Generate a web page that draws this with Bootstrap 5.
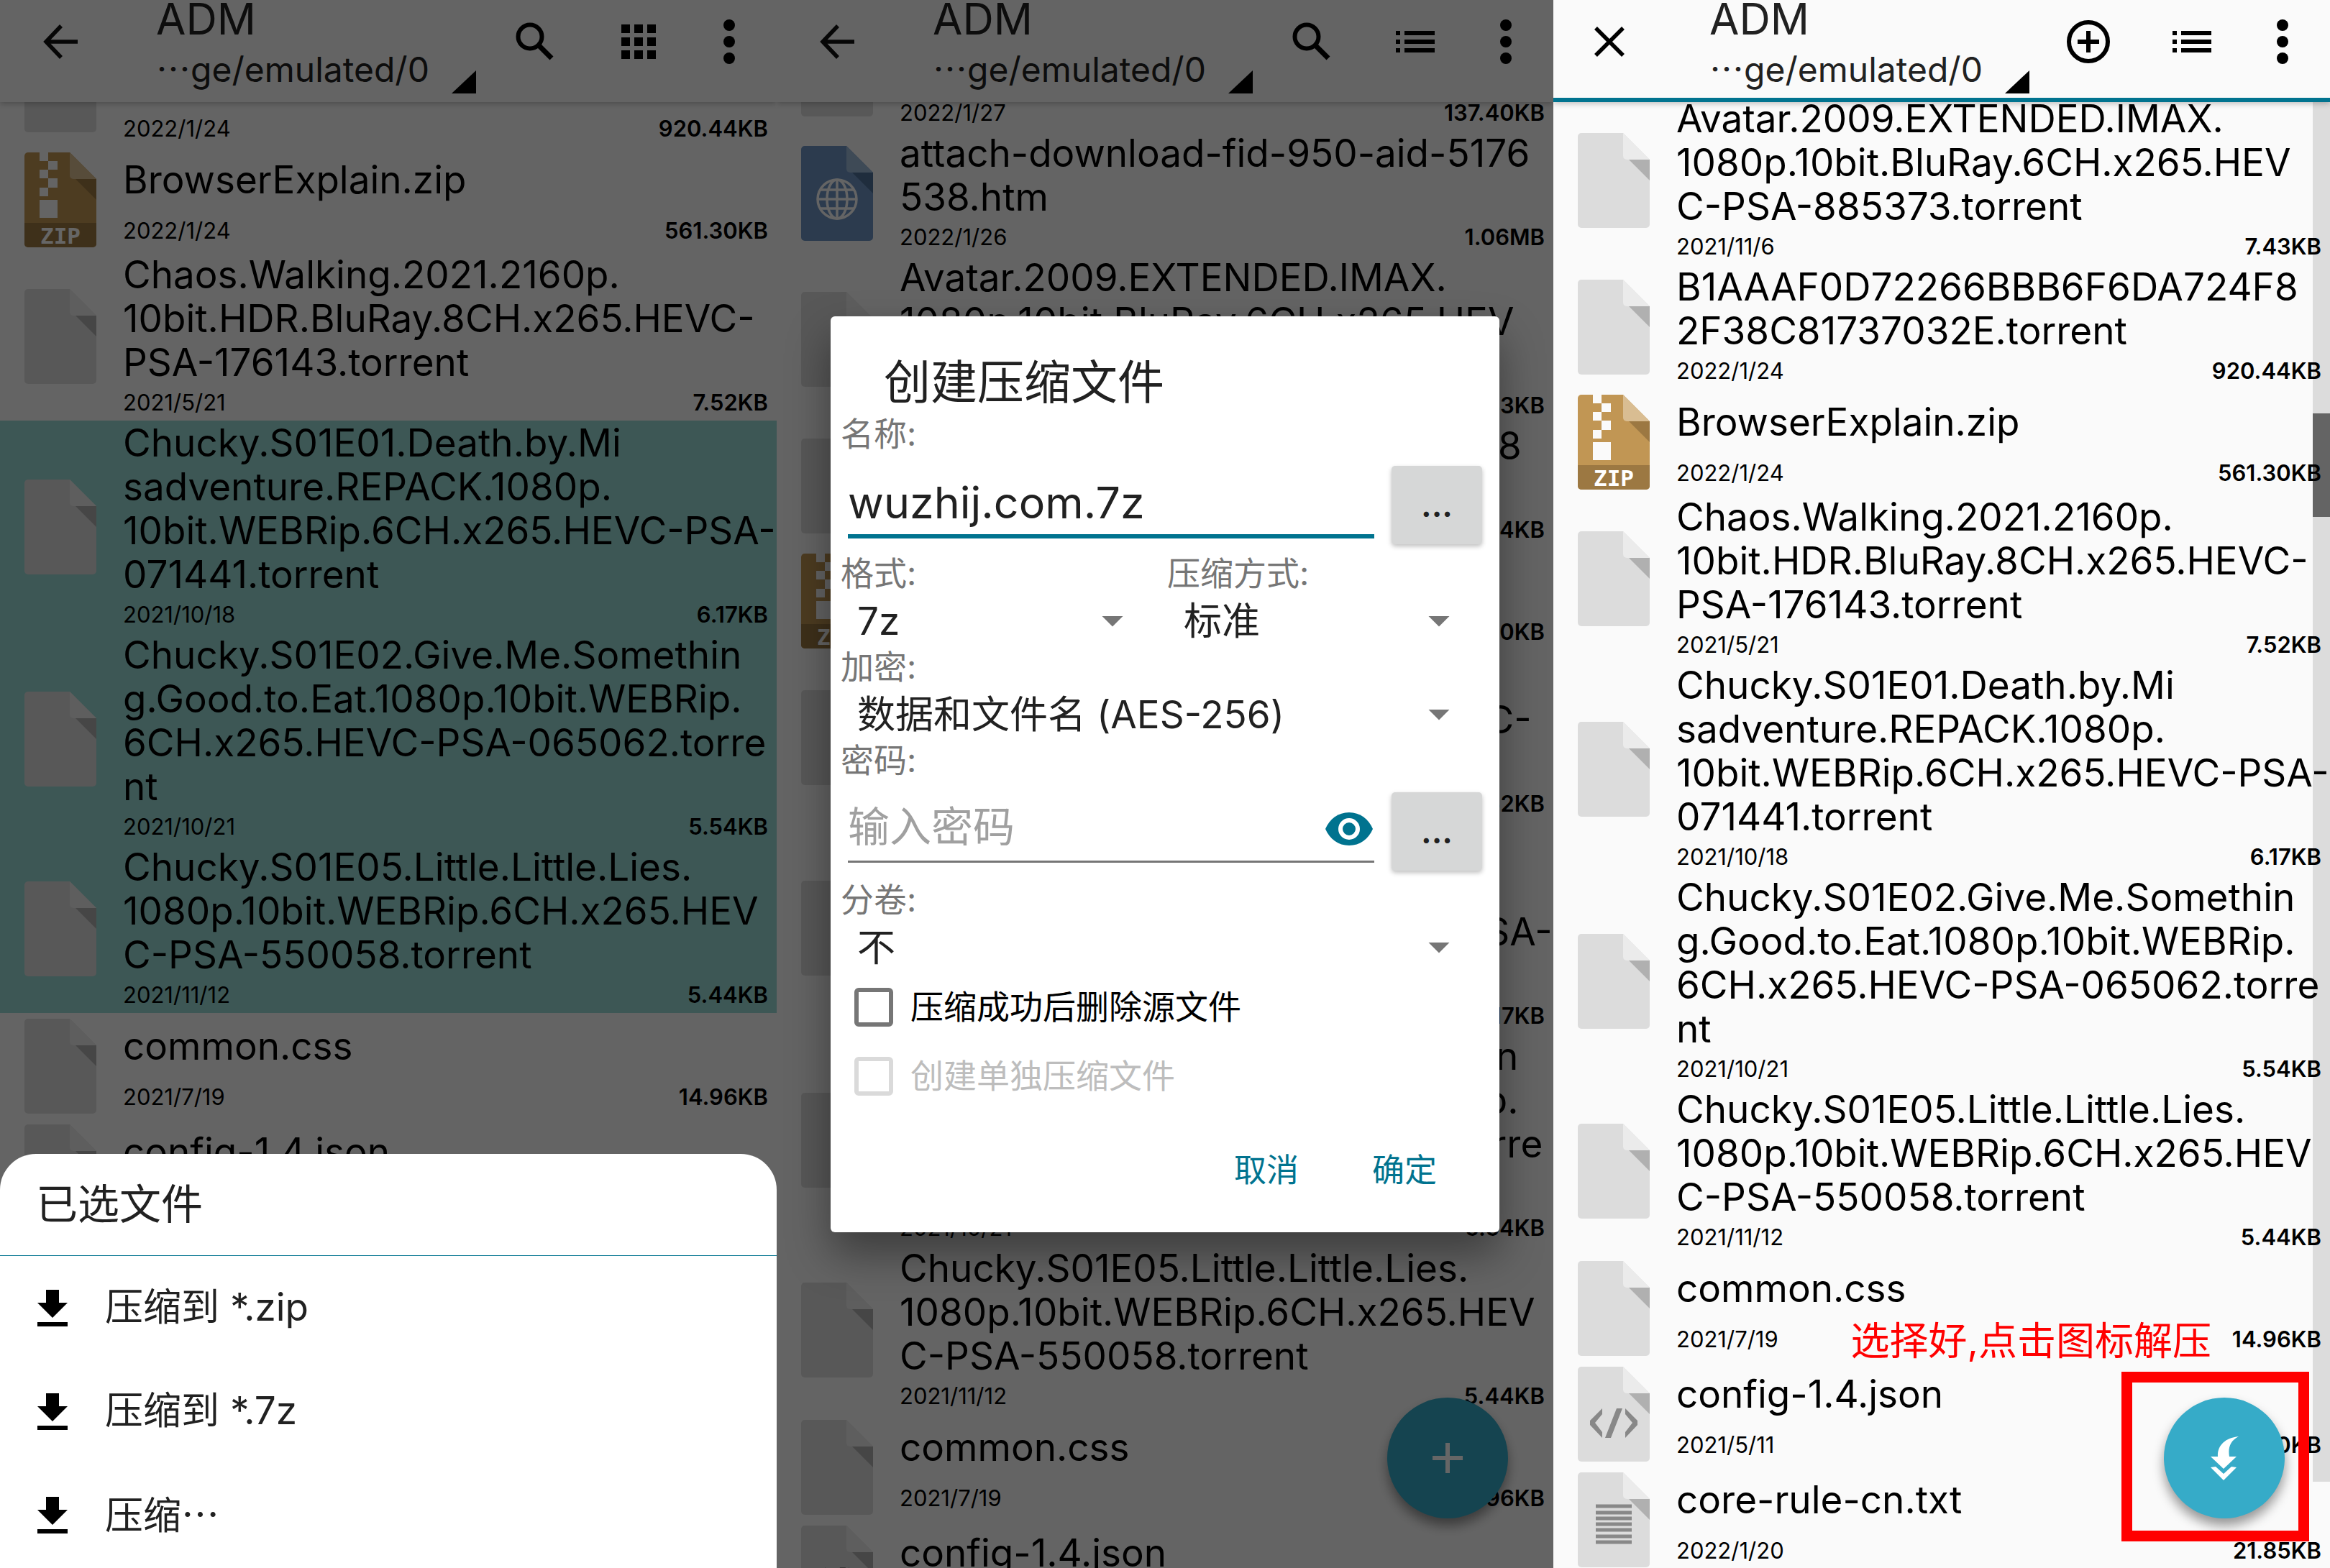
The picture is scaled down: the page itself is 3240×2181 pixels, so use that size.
<!DOCTYPE html>
<html lang="zh-CN">
<head>
<meta charset="utf-8">
<meta name="viewport" content="width=device-width, initial-scale=1">
<title>ADM</title>
<link href="https://cdn.jsdelivr.net/npm/bootstrap@5.3.0/dist/css/bootstrap.min.css" rel="stylesheet">
<style>
body{font-family:Inter,"Noto Sans CJK SC",sans-serif;color:#000;background:#fafafa}
svg{flex-shrink:0}
.phone{background:#fafafa;flex:1 1 0;min-width:0}
.topbar{background:#fafafa;height:142px;z-index:2;color:#212121;box-shadow:0 2px 8px rgba(0,0,0,.25);padding-right:12px}
.topbar.picking{border-bottom:6px solid #00738f}
.topbar button{height:116px;width:144px}
.topbar .nav-btn{width:217px;padding-left:54px}
.topbar .more-btn{width:108px}
.app-name{font-size:60px;line-height:52px}
.app-path{font-size:48px;line-height:82px;white-space:nowrap}
.dots{font-family:"Noto Sans CJK SC",sans-serif}
.corner{margin:98px 10px 0 0}
.plain{border:0;background:none;padding:0;color:#000}
.files{margin-top:-8px;z-index:1}
.scroll-a{margin-top:-111px}
.scroll-b{margin-top:-133px}
.file{min-height:147px;padding:1px 12px 1px 34px;gap:37px}
.file>div{min-width:0}
.picked{background:#98d9d5}
.fname{font-size:53px;line-height:61px;min-height:91px;white-space:nowrap}
.fmeta{font-size:31px;line-height:49px}
.fsize{font-weight:600}
.dim{background:rgba(0,0,0,.6);z-index:3}
.sheet{background:#fff;border-radius:50px 50px 0 0;color:#212121;z-index:4;padding-bottom:2px}
.sheet h2{font-size:58px;line-height:141px;padding-left:50px;font-weight:400;border-bottom:1px solid #00738f}
.sheet button{height:144px;font-size:53px;padding-left:52px;gap:52px;color:#212121}
.dialog-layer{z-index:4;padding-bottom:28px}
.dlg{width:930px;background:#fff;border-radius:6px;color:#212121;box-shadow:0 30px 60px rgba(0,0,0,.4);padding:0 8px 56px 14px}
.dlg h2{font-size:65px;line-height:84px;font-weight:400;padding:50px 0 1px 60px}
.cap{font-size:46px;line-height:56px;color:#767676}
.entry{margin:17px 16px 12px 10px;gap:24px}
.entry input{border:0;border-bottom:6px solid #00738f;height:101px;font-size:61px;padding:8px 0 0;color:#212121;background:none;outline:0;min-width:0}
.entry .secret{border-bottom:3px solid #767676;height:98px;font-size:58px;padding:2px 70px 0 0}
.secret::placeholder{color:#a0a0a0}
.eye{right:2px;top:28px}
.square-btn{flex:none;width:126px;height:109px;background:#d6d7d7;border:0;border-radius:5px;font-size:46px;font-weight:600;box-shadow:0 3px 6px rgba(0,0,0,.25);color:#212121}
.pick::after{content:"";position:absolute;right:61px;top:32px;width:30px;height:15px;background:#767676;clip-path:polygon(0 0,100% 0,50% 100%)}
.pick select{appearance:none;border:0;background:none;width:100%;height:74px;font-size:53px;padding:0 0 0 23px;color:#212121}
.tick{height:96px;gap:24px;padding-left:19px;font-size:46px;color:#000}
.tick input{appearance:none;width:54px;height:54px;border:6px solid #767676;border-radius:6px;margin:0}
.tick.off{color:#bdbdbd}
.tick.off input{border-color:#dadada}
.acts{margin-top:53px;gap:102px;padding-right:79px}
.acts button{font-size:45px;line-height:60px;color:#00738f}
.fab{width:168px;height:168px;border-radius:50%;background:#36abc8;border:0;right:63px;bottom:69px;padding:0;box-shadow:0 10px 16px rgba(0,0,0,.4);z-index:2}
.hint{right:165px;bottom:283px;font-size:54px;line-height:64px;color:#f00;z-index:2;white-space:nowrap}
.frame{right:29px;bottom:37px;width:261px;height:236px;border:15px solid #f00;z-index:3}
.track{right:0;top:142px;width:24px;bottom:120px;background:#dcdcdc}
.thumb{top:433px;height:144px;background:#646464}
</style>
<script src="https://cdn.jsdelivr.net/npm/bootstrap@5.3.0/dist/js/bootstrap.bundle.min.js"></script>
</head>
<body class="vh-100 overflow-hidden">
<svg class="d-none">
  <symbol id="page" viewBox="0 0 100 132"><path fill="#dcdcdc" d="M5 0H63L100 37V127a5 5 0 0 1-5 5H5a5 5 0 0 1-5-5V5a5 5 0 0 1 5-5z"/><path fill="#ebebeb" d="M63 0L100 37H68a5 5 0 0 1-5-5z"/><path fill="#b0b0b0" d="M71 37H100V66z"/></symbol>
  <symbol id="zip" viewBox="0 0 100 132"><path fill="#c19654" d="M5 0H63L100 37V127a5 5 0 0 1-5 5H5a5 5 0 0 1-5-5V5a5 5 0 0 1 5-5z"/><path fill="#d9bd92" d="M63 0L100 37H68a5 5 0 0 1-5-5z"/><path fill="#9c7842" d="M71 37H100V66zM0 98H100V127a5 5 0 0 1-5 5H5a5 5 0 0 1-5-5z"/><path fill="#fafafa" d="M21 0H33V12H46V24H33V36H46V49H33V61H21V49H33V36H21V24H33V12H21zM21 66H46V91H21z"/><text x="50" y="127" text-anchor="middle" font-family="DejaVu Sans Mono" font-weight="700" font-size="31" fill="#fff">ZIP</text></symbol>
  <symbol id="web" viewBox="0 0 100 132"><path fill="#6e94c3" d="M5 0H63L100 37V127a5 5 0 0 1-5 5H5a5 5 0 0 1-5-5V5a5 5 0 0 1 5-5z"/><path fill="#9bb8d8" d="M63 0L100 37H68a5 5 0 0 1-5-5z"/><path fill="#4f7199" d="M71 37H100V66z"/><g fill="none" stroke="#fafafa" stroke-width="3.5"><circle cx="50" cy="74" r="27"/><ellipse cx="50" cy="74" rx="14" ry="27"/><path d="M50 47V101M23 74H77M27 61H73M27 87H73"/></g></symbol>
  <symbol id="code" viewBox="0 0 100 132"><use href="#page"/><path fill="#888" d="M34 58V66L24 78L34 91V99L17 81V75zM66 58V66L76 78L66 91V99L83 81V75zM54 58H62L46 99H38z"/></symbol>
  <symbol id="txt" viewBox="0 0 100 132"><use href="#page"/><path stroke="#888" stroke-width="5" d="M25 47H75M25 56H75M25 64H75M25 72H75M25 80H75M25 89H75M25 97H75"/></symbol>
  <symbol id="back" viewBox="-6 0 54 48"><path fill="none" stroke="#111" stroke-width="5.5" d="M25 2L4 24L25 46M4 24H48"/></symbol>
  <symbol id="find" viewBox="0 0 54 54"><circle cx="20" cy="20" r="16.500" fill="none" stroke="#000" stroke-width="6"/><path stroke="#000" stroke-width="7" d="M32 32L50 50"/></symbol>
  <symbol id="grid" viewBox="0 0 48 48"><path d="M0 0H12V12H0zM18 0H30V12H18zM36 0H48V12H36zM0 18H12V30H0zM18 18H30V30H18zM36 18H48V30H36zM0 36H12V48H0zM18 36H30V48H18zM36 36H48V48H36z"/></symbol>
  <symbol id="list" viewBox="0 0 54 30"><path d="M0 0H6V6H0zM12 0H54V6H12zM0 12H6V18H0zM12 12H54V18H12zM0 24H6V30H0zM12 24H54V30H12z"/></symbol>
  <symbol id="more" viewBox="0 0 16 62"><circle cx="8" cy="8" r="8"/><circle cx="8" cy="31" r="8"/><circle cx="8" cy="54" r="8"/></symbol>
  <symbol id="tri" viewBox="0 0 34 32"><path d="M34 0V32H0z"/></symbol>
  <symbol id="down" viewBox="0 0 42 51"><path d="M12 0H30V18H42L21 39L0 18H12zM0 45H42V51H0z"/></symbol>
</svg>
<div class="d-flex h-100">

  <section class="phone position-relative overflow-hidden h-100">
    <header class="topbar position-relative d-flex align-items-start">
      <button class="plain nav-btn text-start" aria-label="返回"><svg width="54" height="48"><use href="#back"/></svg></button>
      <div class="flex-grow-1"><div class="app-name">ADM</div><div class="app-path"><span class="dots">…</span>ge/emulated/0</div></div>
      <svg class="corner" width="34" height="32"><use href="#tri"/></svg>
      <button class="plain" aria-label="搜索"><svg width="54" height="54"><use href="#find"/></svg></button>
      <button class="plain" aria-label="网格"><svg width="48" height="48"><use href="#grid"/></svg></button>
      <button class="plain more-btn" aria-label="更多"><svg width="16" height="62"><use href="#more"/></svg></button>
    </header>
    <div class="files scroll-a position-relative">
      <div class="file d-flex align-items-center"><svg width="100" height="132"><use href="#page"/></svg><div class="flex-grow-1 align-self-start"><div class="fname">B1AAAF0D72266BBB6F6DA724F8<br>2F38C81737032E.torrent</div><div class="fmeta d-flex justify-content-between"><span>2022/1/24</span><span class="fsize">920.44KB</span></div></div></div>
      <div class="file d-flex align-items-center"><svg width="100" height="132"><use href="#zip"/></svg><div class="flex-grow-1 align-self-start"><div class="fname d-flex align-items-center"><div>BrowserExplain.zip</div></div><div class="fmeta d-flex justify-content-between"><span>2022/1/24</span><span class="fsize">561.30KB</span></div></div></div>
      <div class="file d-flex align-items-center"><svg width="100" height="132"><use href="#page"/></svg><div class="flex-grow-1 align-self-start"><div class="fname">Chaos.Walking.2021.2160p.<br>10bit.HDR.BluRay.8CH.x265.HEVC-<br>PSA-176143.torrent</div><div class="fmeta d-flex justify-content-between"><span>2021/5/21</span><span class="fsize">7.52KB</span></div></div></div>
      <div class="file picked d-flex align-items-center"><svg width="100" height="132"><use href="#page"/></svg><div class="flex-grow-1 align-self-start"><div class="fname">Chucky.S01E01.Death.by.Mi<br>sadventure.REPACK.1080p.<br>10bit.WEBRip.6CH.x265.HEVC-PSA-<br>071441.torrent</div><div class="fmeta d-flex justify-content-between"><span>2021/10/18</span><span class="fsize">6.17KB</span></div></div></div>
      <div class="file picked d-flex align-items-center"><svg width="100" height="132"><use href="#page"/></svg><div class="flex-grow-1 align-self-start"><div class="fname">Chucky.S01E02.Give.Me.Somethin<br>g.Good.to.Eat.1080p.10bit.WEBRip.<br>6CH.x265.HEVC-PSA-065062.torre<br>nt</div><div class="fmeta d-flex justify-content-between"><span>2021/10/21</span><span class="fsize">5.54KB</span></div></div></div>
      <div class="file picked d-flex align-items-center"><svg width="100" height="132"><use href="#page"/></svg><div class="flex-grow-1 align-self-start"><div class="fname">Chucky.S01E05.Little.Little.Lies.<br>1080p.10bit.WEBRip.6CH.x265.HEV<br>C-PSA-550058.torrent</div><div class="fmeta d-flex justify-content-between"><span>2021/11/12</span><span class="fsize">5.44KB</span></div></div></div>
      <div class="file d-flex align-items-center"><svg width="100" height="132"><use href="#page"/></svg><div class="flex-grow-1 align-self-start"><div class="fname d-flex align-items-center"><div>common.css</div></div><div class="fmeta d-flex justify-content-between"><span>2021/7/19</span><span class="fsize">14.96KB</span></div></div></div>
      <div class="file d-flex align-items-center"><svg width="100" height="132"><use href="#code"/></svg><div class="flex-grow-1 align-self-start"><div class="fname d-flex align-items-center"><div>config-1.4.json</div></div></div></div>
    </div>
    <div class="dim position-absolute top-0 start-0 w-100 h-100"></div>
    <div class="sheet position-absolute bottom-0 start-0 w-100">
      <h2 class="m-0">已选文件</h2>
      <button class="plain w-100 d-flex align-items-center"><svg width="42" height="51"><use href="#down"/></svg>压缩到 *.zip</button>
      <button class="plain w-100 d-flex align-items-center"><svg width="42" height="51"><use href="#down"/></svg>压缩到 *.7z</button>
      <button class="plain w-100 d-flex align-items-center"><svg width="42" height="51"><use href="#down"/></svg><span>压缩<span class="dots">…</span></span></button>
    </div>
  </section>

  <section class="phone position-relative overflow-hidden h-100">
    <header class="topbar position-relative d-flex align-items-start">
      <button class="plain nav-btn text-start" aria-label="返回"><svg width="54" height="48"><use href="#back"/></svg></button>
      <div class="flex-grow-1"><div class="app-name">ADM</div><div class="app-path"><span class="dots">…</span>ge/emulated/0</div></div>
      <svg class="corner" width="34" height="32"><use href="#tri"/></svg>
      <button class="plain" aria-label="搜索"><svg width="54" height="54"><use href="#find"/></svg></button>
      <button class="plain" aria-label="列表"><svg width="54" height="30"><use href="#list"/></svg></button>
      <button class="plain more-btn" aria-label="更多"><svg width="16" height="62"><use href="#more"/></svg></button>
    </header>
    <div class="files scroll-b position-relative">
      <div class="file d-flex align-items-center"><svg width="100" height="132"><use href="#page"/></svg><div class="flex-grow-1 align-self-start"><div class="fname"><br><br></div><div class="fmeta d-flex justify-content-between"><span>2022/1/27</span><span class="fsize">137.40KB</span></div></div></div>
      <div class="file d-flex align-items-center"><svg width="100" height="132"><use href="#web"/></svg><div class="flex-grow-1 align-self-start"><div class="fname">attach-download-fid-950-aid-5176<br>538.htm</div><div class="fmeta d-flex justify-content-between"><span>2022/1/26</span><span class="fsize">1.06MB</span></div></div></div>
      <div class="file d-flex align-items-center"><svg width="100" height="132"><use href="#page"/></svg><div class="flex-grow-1 align-self-start"><div class="fname">Avatar.2009.EXTENDED.IMAX.<br>1080p.10bit.BluRay.6CH.x265.HEV<br>C-PSA-885373.torrent</div><div class="fmeta d-flex justify-content-between"><span>2021/11/6</span><span class="fsize">7.43KB</span></div></div></div>
      <div class="file d-flex align-items-center"><svg width="100" height="132"><use href="#page"/></svg><div class="flex-grow-1 align-self-start"><div class="fname">B1AAAF0D72266BBB6F6DA724F8<br>2F38C81737032E.torrent</div><div class="fmeta d-flex justify-content-between"><span>2022/1/24</span><span class="fsize">920.44KB</span></div></div></div>
      <div class="file d-flex align-items-center"><svg width="100" height="132"><use href="#zip"/></svg><div class="flex-grow-1 align-self-start"><div class="fname d-flex align-items-center"><div>BrowserExplain.zip</div></div><div class="fmeta d-flex justify-content-between"><span>2022/1/24</span><span class="fsize">561.30KB</span></div></div></div>
      <div class="file d-flex align-items-center"><svg width="100" height="132"><use href="#page"/></svg><div class="flex-grow-1 align-self-start"><div class="fname">Chaos.Walking.2021.2160p.<br>10bit.HDR.BluRay.8CH.x265.HEVC-<br>PSA-176143.torrent</div><div class="fmeta d-flex justify-content-between"><span>2021/5/21</span><span class="fsize">7.52KB</span></div></div></div>
      <div class="file d-flex align-items-center"><svg width="100" height="132"><use href="#page"/></svg><div class="flex-grow-1 align-self-start"><div class="fname">Chucky.S01E01.Death.by.Mi<br>sadventure.REPACK.1080p.<br>10bit.WEBRip.6CH.x265.HEVC-PSA-<br>071441.torrent</div><div class="fmeta d-flex justify-content-between"><span>2021/10/18</span><span class="fsize">6.17KB</span></div></div></div>
      <div class="file d-flex align-items-center"><svg width="100" height="132"><use href="#page"/></svg><div class="flex-grow-1 align-self-start"><div class="fname">Chucky.S01E02.Give.Me.Somethin<br>g.Good.to.Eat.1080p.10bit.WEBRip.<br>6CH.x265.HEVC-PSA-065062.torre<br>nt</div><div class="fmeta d-flex justify-content-between"><span>2021/10/21</span><span class="fsize">5.54KB</span></div></div></div>
      <div class="file d-flex align-items-center"><svg width="100" height="132"><use href="#page"/></svg><div class="flex-grow-1 align-self-start"><div class="fname">Chucky.S01E05.Little.Little.Lies.<br>1080p.10bit.WEBRip.6CH.x265.HEV<br>C-PSA-550058.torrent</div><div class="fmeta d-flex justify-content-between"><span>2021/11/12</span><span class="fsize">5.44KB</span></div></div></div>
      <div class="file d-flex align-items-center"><svg width="100" height="132"><use href="#page"/></svg><div class="flex-grow-1 align-self-start"><div class="fname d-flex align-items-center"><div>common.css</div></div><div class="fmeta d-flex justify-content-between"><span>2021/7/19</span><span class="fsize">14.96KB</span></div></div></div>
      <div class="file d-flex align-items-center"><svg width="100" height="132"><use href="#code"/></svg><div class="flex-grow-1 align-self-start"><div class="fname d-flex align-items-center"><div>config-1.4.json</div></div></div></div>
    </div>
    <button class="fab position-absolute" aria-label="新建"><svg width="42" height="42" viewBox="0 0 42 42"><path stroke="#fff" stroke-width="6" d="M21 0V42M0 21H42"/></svg></button>
    <div class="dim position-absolute top-0 start-0 w-100 h-100"></div>
    <div class="dialog-layer position-absolute top-0 start-0 w-100 h-100 d-flex align-items-center justify-content-center">
      <form class="dlg">
        <h2 class="m-0">创建压缩文件</h2>
        <label class="cap d-block" for="arc">名称:</label>
        <div class="entry d-flex"><input id="arc" class="flex-grow-1" type="text" value="wuzhij.com.7z"><button type="button" class="square-btn">...</button></div>
        <div class="d-flex">
          <div class="w-50"><label class="cap d-block" for="fmt">格式:</label><div class="pick position-relative"><select id="fmt"><option>7z</option></select></div></div>
          <div class="w-50"><label class="cap d-block" for="lvl">压缩方式:</label><div class="pick position-relative"><select id="lvl"><option>标准</option></select></div></div>
        </div>
        <label class="cap d-block" for="enc">加密:</label>
        <div class="pick position-relative"><select id="enc"><option>数据和文件名 (AES-256)</option></select></div>
        <label class="cap d-block" for="pwd">密码:</label>
        <div class="entry d-flex"><div class="position-relative d-flex flex-grow-1"><input id="pwd" class="secret w-100" type="password" placeholder="输入密码"><button type="button" class="plain eye position-absolute d-flex" aria-label="显示密码"><svg width="66" height="46" viewBox="0 0 66 46"><path fill="#00738f" d="M33 0C18 0 6 9 0 23C6 37 18 46 33 46S60 37 66 23C60 9 48 0 33 0z"/><circle cx="33" cy="23" r="12" fill="#00738f" stroke="#fff" stroke-width="6"/></svg></button></div><button type="button" class="square-btn">...</button></div>
        <label class="cap d-block" for="vol">分卷:</label>
        <div class="pick position-relative"><select id="vol"><option>不</option></select></div>
        <label class="tick d-flex align-items-center"><input type="checkbox">压缩成功后删除源文件</label>
        <label class="tick off d-flex align-items-center"><input type="checkbox" disabled>创建单独压缩文件</label>
        <div class="acts d-flex justify-content-end"><button type="button" class="plain">取消</button><button type="button" class="plain">确定</button></div>
      </form>
    </div>
  </section>

  <section class="phone position-relative overflow-hidden h-100">
    <header class="topbar picking position-relative d-flex align-items-start">
      <button class="plain nav-btn text-start" aria-label="关闭"><svg width="48" height="42" viewBox="0 0 48 42"><path stroke="#000" stroke-width="5.500" d="M5 2L43 40M43 2L5 40"/></svg></button>
      <div class="flex-grow-1"><div class="app-name">ADM</div><div class="app-path"><span class="dots">…</span>ge/emulated/0</div></div>
      <svg class="corner" width="34" height="32"><use href="#tri"/></svg>
      <button class="plain" aria-label="添加"><svg width="60" height="60" viewBox="0 0 60 60"><circle cx="30" cy="30" r="27" fill="none" stroke="#000" stroke-width="6"/><path stroke="#000" stroke-width="6" d="M30 15V45M15 30H45"/></svg></button>
      <button class="plain" aria-label="列表"><svg width="54" height="30"><use href="#list"/></svg></button>
      <button class="plain more-btn" aria-label="更多"><svg width="16" height="62"><use href="#more"/></svg></button>
    </header>
    <div class="track position-absolute"><div class="thumb position-relative"></div></div>
    <div class="files position-relative">
      <div class="file d-flex align-items-center"><svg width="100" height="132"><use href="#page"/></svg><div class="flex-grow-1 align-self-start"><div class="fname">Avatar.2009.EXTENDED.IMAX.<br>1080p.10bit.BluRay.6CH.x265.HEV<br>C-PSA-885373.torrent</div><div class="fmeta d-flex justify-content-between"><span>2021/11/6</span><span class="fsize">7.43KB</span></div></div></div>
      <div class="file d-flex align-items-center"><svg width="100" height="132"><use href="#page"/></svg><div class="flex-grow-1 align-self-start"><div class="fname">B1AAAF0D72266BBB6F6DA724F8<br>2F38C81737032E.torrent</div><div class="fmeta d-flex justify-content-between"><span>2022/1/24</span><span class="fsize">920.44KB</span></div></div></div>
      <div class="file d-flex align-items-center"><svg width="100" height="132"><use href="#zip"/></svg><div class="flex-grow-1 align-self-start"><div class="fname d-flex align-items-center"><div>BrowserExplain.zip</div></div><div class="fmeta d-flex justify-content-between"><span>2022/1/24</span><span class="fsize">561.30KB</span></div></div></div>
      <div class="file d-flex align-items-center"><svg width="100" height="132"><use href="#page"/></svg><div class="flex-grow-1 align-self-start"><div class="fname">Chaos.Walking.2021.2160p.<br>10bit.HDR.BluRay.8CH.x265.HEVC-<br>PSA-176143.torrent</div><div class="fmeta d-flex justify-content-between"><span>2021/5/21</span><span class="fsize">7.52KB</span></div></div></div>
      <div class="file d-flex align-items-center"><svg width="100" height="132"><use href="#page"/></svg><div class="flex-grow-1 align-self-start"><div class="fname">Chucky.S01E01.Death.by.Mi<br>sadventure.REPACK.1080p.<br>10bit.WEBRip.6CH.x265.HEVC-PSA-<br>071441.torrent</div><div class="fmeta d-flex justify-content-between"><span>2021/10/18</span><span class="fsize">6.17KB</span></div></div></div>
      <div class="file d-flex align-items-center"><svg width="100" height="132"><use href="#page"/></svg><div class="flex-grow-1 align-self-start"><div class="fname">Chucky.S01E02.Give.Me.Somethin<br>g.Good.to.Eat.1080p.10bit.WEBRip.<br>6CH.x265.HEVC-PSA-065062.torre<br>nt</div><div class="fmeta d-flex justify-content-between"><span>2021/10/21</span><span class="fsize">5.54KB</span></div></div></div>
      <div class="file d-flex align-items-center"><svg width="100" height="132"><use href="#page"/></svg><div class="flex-grow-1 align-self-start"><div class="fname">Chucky.S01E05.Little.Little.Lies.<br>1080p.10bit.WEBRip.6CH.x265.HEV<br>C-PSA-550058.torrent</div><div class="fmeta d-flex justify-content-between"><span>2021/11/12</span><span class="fsize">5.44KB</span></div></div></div>
      <div class="file d-flex align-items-center"><svg width="100" height="132"><use href="#page"/></svg><div class="flex-grow-1 align-self-start"><div class="fname d-flex align-items-center"><div>common.css</div></div><div class="fmeta d-flex justify-content-between"><span>2021/7/19</span><span class="fsize">14.96KB</span></div></div></div>
      <div class="file d-flex align-items-center"><svg width="100" height="132"><use href="#code"/></svg><div class="flex-grow-1 align-self-start"><div class="fname d-flex align-items-center"><div>config-1.4.json</div></div><div class="fmeta d-flex justify-content-between"><span>2021/5/11</span><span class="fsize">5.10KB</span></div></div></div>
      <div class="file d-flex align-items-center"><svg width="100" height="132"><use href="#txt"/></svg><div class="flex-grow-1 align-self-start"><div class="fname d-flex align-items-center"><div>core-rule-cn.txt</div></div><div class="fmeta d-flex justify-content-between"><span>2022/1/20</span><span class="fsize">21.85KB</span></div></div></div>
    </div>
    <div class="hint position-absolute">选择好,点击图标解压</div>
    <button class="fab position-absolute" aria-label="解压"><svg width="168" height="168" viewBox="0 0 168 168"><path fill="#fff" d="M104 54C92 60 89 70 91 82H101L83 99L65 82H75C74 68 84 56 104 54zM65 97L72 96L83 106L94 96L101 97L83 115z"/></svg></button>
    <div class="frame position-absolute"></div>
  </section>
</div>
</body>
</html>
